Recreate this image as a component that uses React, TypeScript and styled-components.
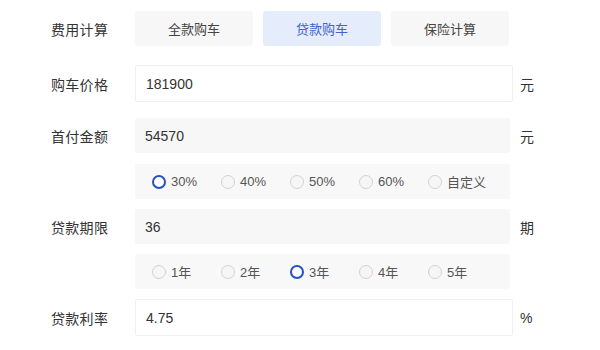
import React, { useState } from 'react';
import styled, { createGlobalStyle } from 'styled-components';

const GlobalStyle = createGlobalStyle`
  body {
    margin: 0;
    background: #fff;
    font-family: "Liberation Sans", Arial, "Noto Sans CJK SC", sans-serif;
    color: #333;
  }
`;

const Form = styled.div`
  padding-top: 11px;
  width: 600px;
`;

const Row = styled.div<{ $top?: number }>`
  display: grid;
  grid-template-columns: 135px 385px auto;
  align-items: center;
  margin-top: ${({ $top }) => $top ?? 10}px;
`;

const Label = styled.div`
  padding-left: 51px;
  font-size: 14px;
  color: #333;
  letter-spacing: 0.3px;
`;

const Tabs = styled.div`
  display: flex;
  gap: 10px;
`;

const Tab = styled.button<{ $active?: boolean }>`
  width: 118px;
  height: 35px;
  border: none;
  border-radius: 3px;
  font-family: inherit;
  font-size: 13px;
  cursor: pointer;
  background: ${({ $active }) => ($active ? '#e5edfc' : '#f7f7f7')};
  color: ${({ $active }) => ($active ? '#3d64d2' : '#444')};
`;

const Field = styled.input<{ $light?: boolean }>`
  box-sizing: border-box;
  width: ${({ $light }) => ($light ? 378 : 375)}px;
  height: ${({ $light }) => ($light ? 37 : 35)}px;
  padding: 0 10px;
  border: ${({ $light }) => ($light ? '1px solid #f0f0f0' : 'none')};
  border-radius: 2px;
  background: ${({ $light }) => ($light ? '#fff' : '#f7f7f7')};
  font-family: inherit;
  font-size: 14px;
  color: #333;
  outline: none;
`;

const Unit = styled.span`
  font-size: 14px;
  color: #333;
`;

const Options = styled.div`
  grid-column: 2;
  box-sizing: border-box;
  width: 375px;
  height: 35px;
  padding-left: 17px;
  display: grid;
  grid-template-columns: repeat(5, 69px);
  align-items: center;
  background: #f8f8f8;
  border-radius: 2px;
`;

const Option = styled.label`
  display: flex;
  align-items: center;
  gap: 5px;
  font-size: 13px;
  color: #555;
  cursor: pointer;
`;

const Dot = styled.span<{ $on?: boolean }>`
  box-sizing: border-box;
  width: 14px;
  height: 14px;
  border-radius: 50%;
  border: ${({ $on }) => ($on ? '2.6px solid #2452c4' : '1px solid #d2d2d2')};
  background: ${({ $on }) => ($on ? '#fff' : '#f6f6f6')};
`;

const RadioGroup: React.FC<{ items: string[]; value: number; onChange: (i: number) => void }> = ({
  items,
  value,
  onChange,
}) => (
  <Options>
    {items.map((item, i) => (
      <Option key={item} onClick={() => onChange(i)}>
        <Dot $on={i === value} />
        {item}
      </Option>
    ))}
  </Options>
);

const App: React.FC = () => {
  const [tab, setTab] = useState(1);
  const [ratio, setRatio] = useState(0);
  const [years, setYears] = useState(2);

  return (
    <>
      <GlobalStyle />
      <Form>
        <Row $top={0}>
          <Label>费用计算</Label>
          <Tabs>
            {['全款购车', '贷款购车', '保险计算'].map((t, i) => (
              <Tab key={t} $active={i === tab} onClick={() => setTab(i)}>
                {t}
              </Tab>
            ))}
          </Tabs>
        </Row>

        <Row $top={19}>
          <Label>购车价格</Label>
          <Field $light defaultValue="181900" />
          <Unit>元</Unit>
        </Row>

        <Row $top={16}>
          <Label>首付金额</Label>
          <Field defaultValue="54570" />
          <Unit>元</Unit>
        </Row>

        <Row $top={11}>
          <RadioGroup items={['30%', '40%', '50%', '60%', '自定义']} value={ratio} onChange={setRatio} />
        </Row>

        <Row>
          <Label>贷款期限</Label>
          <Field defaultValue="36" />
          <Unit>期</Unit>
        </Row>

        <Row>
          <RadioGroup items={['1年', '2年', '3年', '4年', '5年']} value={years} onChange={setYears} />
        </Row>

        <Row>
          <Label>贷款利率</Label>
          <Field $light defaultValue="4.75" />
          <Unit>%</Unit>
        </Row>
      </Form>
    </>
  );
};

export default App;
